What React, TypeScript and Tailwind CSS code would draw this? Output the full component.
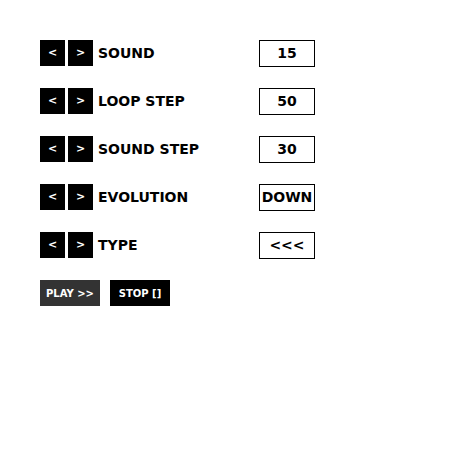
const rows = [
  { label: "SOUND", value: "15" },
  { label: "LOOP STEP", value: "50" },
  { label: "SOUND STEP", value: "30" },
  { label: "EVOLUTION", value: "DOWN" },
  { label: "TYPE", value: "<<<" },
];

export default function App() {
  return (
    <div className="min-h-[465px] bg-white pl-10 pt-10 text-black font-['DejaVu_Sans',Verdana,sans-serif]">
      <div className="flex flex-col gap-[22px]">
        {rows.map((row) => (
          <div key={row.label} className="flex items-center h-[26px]">
            <button className="w-[25px] h-[26px] bg-black text-white text-[11px] font-bold flex items-center justify-center">
              &lt;
            </button>
            <button className="ml-[3px] w-[25px] h-[26px] bg-black text-white text-[11px] font-bold flex items-center justify-center">
              &gt;
            </button>
            <span className="ml-[5px] w-[161px] text-[14px] font-bold leading-none">{row.label}</span>
            <div className="w-[56px] h-[27px] border border-black flex items-center justify-center text-[14px] font-bold">
              {row.value}
            </div>
          </div>
        ))}
      </div>
      <div className="flex gap-[10px] mt-[22px]">
        <button className="w-[60px] h-[26px] bg-[#333333] text-white text-[10px] font-bold flex items-center justify-center">
          PLAY &gt;&gt;
        </button>
        <button className="w-[60px] h-[26px] bg-black text-white text-[10px] font-bold flex items-center justify-center">
          STOP []
        </button>
      </div>
    </div>
  );
}
